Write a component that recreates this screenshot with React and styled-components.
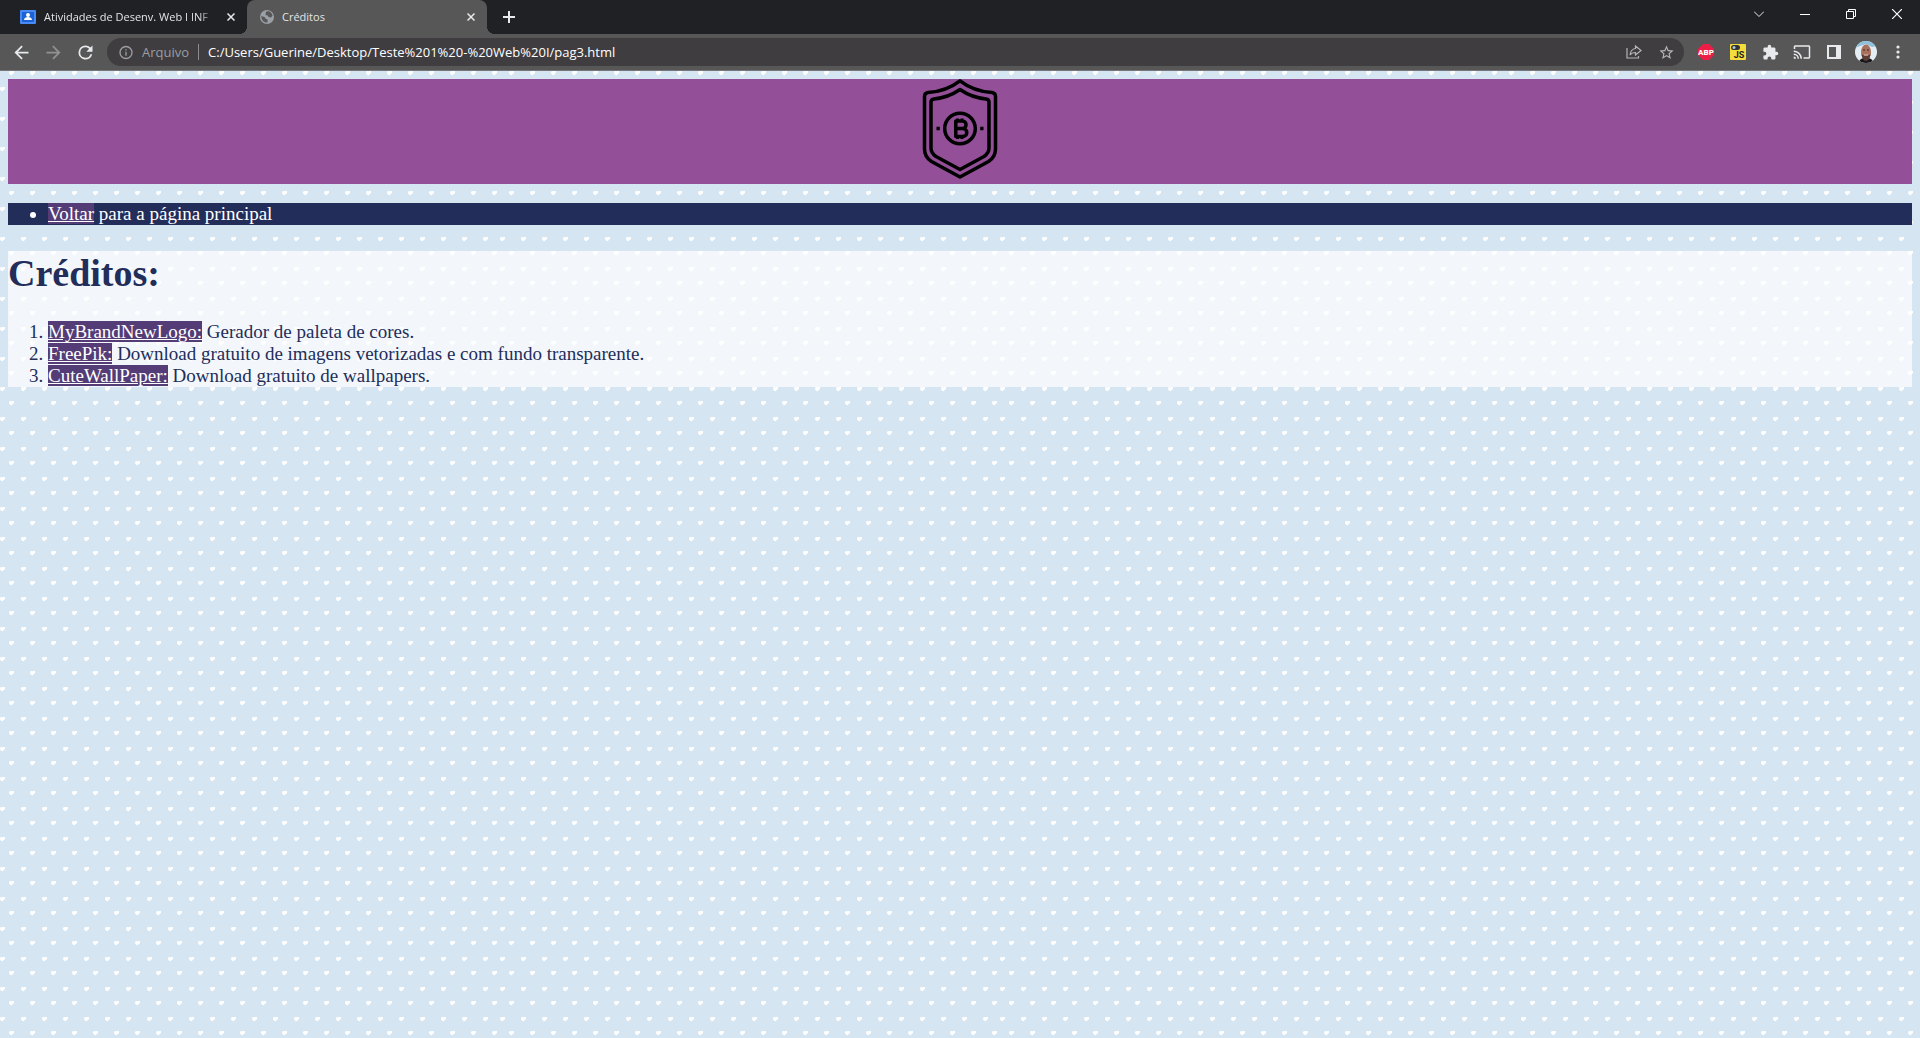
import React from "react";
import styled, { createGlobalStyle } from "styled-components";

const heartPath = "M0 1L1 0H2L2.500 .6L3 0H5V2L2.500 4.200H2L.3 3Z";
const hearts = Array.from({ length: 24 }, (_, i) =>
  `<use href="#h" x="${i * 21 + 9}" y="0"/>` + `<use href="#h" x="${i * 21}" y="16"/>`
).join("");
const wallpaper = `<svg xmlns="http://www.w3.org/2000/svg" width="500" height="30"><defs><path id="h" d="${heartPath}" fill="#fff"/></defs><rect width="500" height="30" fill="#d5e5f2"/>${hearts}</svg>`;
const wallpaperUrl = `url("data:image/svg+xml,${encodeURIComponent(wallpaper)}")`;

const GlobalStyle = createGlobalStyle`
  html, body { margin: 0; min-height: 100%; }
  body { font-family: "Liberation Serif", "Times New Roman", serif; }
  *, *::before, *::after { box-sizing: border-box; }
`;

const Window = styled.div`
  display: flex;
  flex-direction: column;
  min-height: 100vh;
`;

const TabStrip = styled.div`
  display: flex;
  height: 34px;
  background: #202124;
  color: #e3e4e6;
  font: 11px/16px "Open Sans", "Noto Sans", sans-serif;
`;

const Tab = styled.div`
  position: relative;
  display: flex;
  align-items: center;
  gap: 8px;
  width: ${(p) => (p.$active ? 240 : 247)}px;
  padding: 0 8px 0 ${(p) => (p.$active ? 13 : 20)}px;
  border-radius: 8px 8px 0 0;
  background: ${(p) => (p.$active ? "#575757" : "transparent")};

  &::before, &::after {
    content: ${(p) => (p.$active ? '""' : "none")};
    position: absolute;
    bottom: 0;
    width: 8px;
    height: 8px;
  }
  &::before { left: -8px; background: radial-gradient(circle at 0 0, transparent 8px, #575757 8px); }
  &::after { right: -8px; background: radial-gradient(circle at 100% 0, transparent 8px, #575757 8px); }
`;

const TabTitle = styled.span`
  flex: 1;
  min-width: 0;
  overflow: hidden;
  white-space: nowrap;
  mask-image: ${(p) => (p.$faded ? "linear-gradient(to left, transparent, #000 16px)" : "none")};
`;

const IconButton = styled.button`
  display: flex;
  align-items: center;
  justify-content: center;
  flex: none;
  width: ${(p) => p.$size || 32}px;
  height: ${(p) => p.$height || p.$size || 32}px;
  padding: 0;
  border: 0;
  background: transparent;
  color: ${(p) => p.$color || "#e8eaed"};
`;

const NewTab = styled(IconButton)`
  margin-left: 6px;
  align-self: center;
`;

const WindowControls = styled.div`
  display: flex;
  margin-left: auto;
`;

const Toolbar = styled.div`
  display: flex;
  align-items: center;
  height: 37px;
  padding: 0 6px 0 5px;
  background: #575757;
  border-bottom: 1px solid #77777a;
`;

const AddressBar = styled.div`
  display: flex;
  flex: 1;
  align-items: center;
  height: 28px;
  margin-left: 6px;
  padding: 0 2px 0 11px;
  border-radius: 14px;
  background: #3f3d40;
  font: 13px/20px "Open Sans", "Noto Sans", sans-serif;
`;

const Scheme = styled.label`
  margin-left: 8px;
  padding-right: 9px;
  color: #9b9ea3;
  border-right: 1px solid #8a8b8e;
  line-height: 16px;
`;

const Url = styled.input`
  flex: 1;
  min-width: 0;
  padding: 0 0 0 9px;
  border: 0;
  outline: 0;
  background: transparent;
  color: #fff;
  font: inherit;
`;

const Extensions = styled.div`
  display: flex;
  margin-left: 6px;
`;

const Page = styled.div`
  flex: 1;
  padding: 8px;
  background: #d5e5f2 ${wallpaperUrl};
  color: #222d5a;
  font-size: 19px;
  line-height: 22px;
`;

const Banner = styled.header`
  display: flex;
  justify-content: center;
  padding-bottom: 5px;
  background: #934f97;
`;

const Nav = styled.ul`
  margin: 19px 0 26px;
  padding-left: 40px;
  background: #222d5a;
  color: #fff;
`;

const Credits = styled.section`
  background: rgba(255, 255, 255, 0.7);
`;

const Title = styled.h1`
  margin: 0 0 26px;
  font-size: 38px;
  line-height: 44px;
`;

const List = styled.ol`
  margin: 0;
  padding-left: 40px;
`;

const Link = styled.a`
  background: #543c77;
  color: #fff;
`;

const Svg = ({ size = 16, children, ...rest }) => (
  <svg width={size} height={size} viewBox="0 0 24 24" fill="currentColor" aria-hidden="true" {...rest}>{children}</svg>
);
const CloseIcon = () => (
  <Svg size={8} viewBox="0 0 8 8" stroke="currentColor" strokeWidth="1.5"><path d="M.5.5l7 7M7.5.5l-7 7" /></Svg>
);
const ClassroomIcon = () => (
  <Svg viewBox="0 0 16 16">
    <rect y="1" width="16" height="14" rx="1" fill="#4a8af4" />
    <rect x="2" y="3" width="12" height="10" fill="#1b63d4" />
    <circle cx="8" cy="6" r="2" fill="#fff" />
    <path d="M4 11c0-2 2-3 4-3s4 1 4 3z" fill="#fff" />
  </Svg>
);
const GlobeIcon = () => (
  <Svg viewBox="0 0 14 14" size={14}>
    <circle cx="7" cy="7" r="7" fill="#9aa0a6" />
    <path d="M1.300 6L4.500 7l1.500 2 1.500.5v3C4 12.800 1.400 10.500 1.300 6zM6 1.500l3-.2c1.500.6 3 2 3.500 4.500L11 7.500 8.500 7l-.8-1.500L5.500 5z" fill="#575757" />
  </Svg>
);
const BackIcon = () => <Svg size={21}><path d="M20 11H7.830l5.590-5.590L12 4l-8 8 8 8 1.410-1.410L7.830 13H20v-2z" /></Svg>;
const ForwardIcon = () => <Svg size={21}><path d="M12 4l-1.410 1.410L16.170 11H4v2h12.170l-5.580 5.590L12 20l8-8z" /></Svg>;
const ReloadIcon = () => <Svg size={21}><path d="M17.650 6.350A7.960 7.960 0 0 0 12 4a8 8 0 1 0 7.730 10h-2.080A6 6 0 1 1 12 6c1.660 0 3.140.69 4.220 1.780L13 11h7V4z" /></Svg>;
const InfoIcon = () => <Svg size={17}><path d="M11 7h2v2h-2zm0 4h2v6h-2zm1-9a10 10 0 1 0 0 20 10 10 0 0 0 0-20zm0 18a8 8 0 1 1 0-16 8 8 0 0 1 0 16z" /></Svg>;
const ShareIcon = () => (
  <Svg viewBox="0 0 16 16" fill="none" stroke="currentColor" strokeWidth="1.2">
    <path d="M1 4v10h11.500V12M9.500 2l5.500 4.500-5.500 4.500V8.500C7 8.500 5 9.500 4 11c.4-3.500 2-6 5.500-6.500z" />
  </Svg>
);
const StarIcon = () => <Svg size={17}><path d="M22 9.240l-7.190-.62L12 2 9.190 8.630 2 9.240l5.460 4.730L5.820 21 12 17.270 18.180 21l-1.630-7.030L22 9.240zM12 15.400l-3.760 2.270 1-4.280-3.320-2.880 4.380-.38L12 6.100l1.710 4.040 4.380.38-3.320 2.880 1 4.280L12 15.400z" /></Svg>;
const AbpIcon = () => (
  <Svg viewBox="0 0 16 16">
    <path d="M5 0h6l5 5v6l-5 5H5l-5-5V5z" fill="#ed1e45" />
    <text x="8" y="11" textAnchor="middle" fontFamily="Roboto, sans-serif" fontWeight="900" fontSize="8" fill="#fff">ABP</text>
  </Svg>
);
const JsIcon = () => (
  <Svg viewBox="0 0 16 16">
    <rect width="16" height="16" rx="1" fill="#f5de3c" />
    <rect x="1" y="1" width="9" height="5" rx="2.500" fill="#333" />
    <circle cx="4" cy="3.500" r="1.500" fill="#aaccd8" />
    <text x="9" y="14" textAnchor="middle" fontFamily="Roboto, sans-serif" fontWeight="700" fontSize="9" fill="#222">JS</text>
  </Svg>
);
const PuzzleIcon = () => <Svg size={17}><path d="M20.500 11H19V7c0-1.100-.9-2-2-2h-4V3.500a2.500 2.500 0 0 0-5 0V5H4c-1.100 0-2 .9-2 2v3.800h1.500a2.700 2.700 0 0 1 0 5.400H2V20c0 1.100.9 2 2 2h3.800v-1.500a2.700 2.700 0 0 1 5.400 0V22H17c1.100 0 2-.9 2-2v-4h1.500a2.500 2.500 0 0 0 0-5z" /></Svg>;
const CastIcon = () => <Svg size={18}><path d="M21 3H3c-1.100 0-2 .9-2 2v3h2V5h18v14h-7v2h7c1.100 0 2-.9 2-2V5c0-1.100-.9-2-2-2zM1 18v3h3a3 3 0 0 0-3-3zm0-4v2a5 5 0 0 1 5 5h2a7 7 0 0 0-7-7zm0-4v2a9 9 0 0 1 9 9h2c0-6.080-4.930-11-11-11z" /></Svg>;
const PanelIcon = () => <Svg size={14} viewBox="0 0 14 14"><path fillRule="evenodd" d="M0 0h14v14H0zM2 2v10h7V2z" /></Svg>;
const Avatar = () => (
  <Svg size={22} viewBox="0 0 22 22">
    <defs><clipPath id="face"><circle cx="11" cy="11" r="11" /></clipPath></defs>
    <g clipPath="url(#face)">
      <rect width="22" height="22" fill="#e4edf3" />
      <path d="M0 0h22v5l-5 1-6-3-6 2-5 2z" fill="#8fc0dc" />
      <path d="M4 22c0-4 3-5 7-5s7 1 7 5z" fill="#17171c" />
      <ellipse cx="11" cy="11" rx="5" ry="7.500" fill="#a8705d" />
      <path d="M6.500 13c2 2 7 2 9 0-.5 4-2 7-4.500 7s-4-3-4.500-7z" fill="#5c3b35" />
      <path d="M8 9h2M12 9h2" stroke="#3c2724" />
      <path d="M9 14h4" stroke="#e5c5bb" />
    </g>
  </Svg>
);
const MenuIcon = () => <Svg size={14} viewBox="0 0 14 14"><circle cx="7" cy="2" r="1.600" /><circle cx="7" cy="7" r="1.600" /><circle cx="7" cy="12" r="1.600" /></Svg>;

const ShieldLogo = () => (
  <svg width="100" height="100" viewBox="0 0 100 100" fill="none" stroke="#000" strokeWidth="3.500" strokeLinejoin="round" role="img" aria-label="Logo">
    <path d="M50 1.800C42 8 32 12.500 18 13.500q-3.500.5-3.500 4V70q0 8 7 12.500L50 98 78.500 82.500q7-4.500 7-12.500V17.500q0-3.500-3.500-4C68 12.500 58 8 50 1.800z" />
    <path d="M50 10.500C42 16 34 19 24 20q-3 .5-3 3v46q0 5 5 8.500L50 90.500 74 77.500q5-3.500 5-8.500V23q0-2.500-3-3C66 19 58 16 50 10.500z" />
    <circle cx="50" cy="49.500" r="15.300" />
    <path d="M45.800 42h6.500a3.500 3.500 0 0 1 0 7.500H45.800zM45.800 49.500h7a4 4 0 0 1 0 8h-7z" />
    <path d="M47.500 39.500V42M52 39.500V42M47.500 57V60M52 57V60" strokeWidth="3" />
    <path d="M26.500 49.500h3.300M70.200 49.500h3.300" />
  </svg>
);

const credits = [
  ["MyBrandNewLogo:", "Gerador de paleta de cores."],
  ["FreePik:", "Download gratuito de imagens vetorizadas e com fundo transparente."],
  ["CuteWallPaper:", "Download gratuito de wallpapers."],
];

export default function App() {
  return (
    <>
      <GlobalStyle />
      <Window>
        <TabStrip>
          <Tab>
            <ClassroomIcon />
            <TabTitle $faded>Atividades de Desenv. Web I INF</TabTitle>
            <IconButton $size={16} aria-label="Fechar guia"><CloseIcon /></IconButton>
          </Tab>
          <Tab $active>
            <GlobeIcon />
            <TabTitle>Créditos</TabTitle>
            <IconButton $size={16} aria-label="Fechar guia"><CloseIcon /></IconButton>
          </Tab>
          <NewTab aria-label="Nova guia">
            <Svg size={12} viewBox="0 0 12 12"><path d="M5 0h2v5h5v2H7v5H5V7H0V5h5z" /></Svg>
          </NewTab>
          <WindowControls>
            <IconButton $size={46} $height={28} aria-label="Pesquisar guias"><Svg size={10} viewBox="0 0 10 10" fill="none" stroke="currentColor"><path d="M0 2.500l5 5 5-5" /></Svg></IconButton>
            <IconButton $size={46} $height={28} $color="#fff" aria-label="Minimizar"><Svg size={10} viewBox="0 0 10 10"><path d="M0 5h10v1H0z" /></Svg></IconButton>
            <IconButton $size={46} $height={28} $color="#fff" aria-label="Restaurar"><Svg size={10} viewBox="0 0 10 10" fill="none" stroke="currentColor"><path d="M.5 2.500h7v7h-7zM2.500 2.500v-2h7v7h-2" /></Svg></IconButton>
            <IconButton $size={46} $height={28} $color="#fff" aria-label="Fechar"><Svg size={10} viewBox="0 0 10 10" stroke="currentColor" strokeWidth="1.200"><path d="M0 0l10 10M10 0L0 10" /></Svg></IconButton>
          </WindowControls>
        </TabStrip>
        <Toolbar>
          <IconButton aria-label="Voltar"><BackIcon /></IconButton>
          <IconButton $color="#929294" aria-label="Avançar"><ForwardIcon /></IconButton>
          <IconButton aria-label="Recarregar"><ReloadIcon /></IconButton>
          <AddressBar>
            <IconButton $size={16} $color="#9b9ea3" aria-label="Informações do site"><InfoIcon /></IconButton>
            <Scheme htmlFor="url">Arquivo</Scheme>
            <Url id="url" type="text" spellCheck={false} defaultValue="C:/Users/Guerine/Desktop/Teste%201%20-%20Web%20I/pag3.html" />
            <IconButton $color="#b4b5b8" aria-label="Compartilhar"><ShareIcon /></IconButton>
            <IconButton $color="#b4b5b8" aria-label="Favoritar"><StarIcon /></IconButton>
          </AddressBar>
          <Extensions>
            <IconButton aria-label="Adblock Plus"><AbpIcon /></IconButton>
            <IconButton aria-label="JavaScript"><JsIcon /></IconButton>
            <IconButton aria-label="Extensões"><PuzzleIcon /></IconButton>
            <IconButton aria-label="Transmitir"><CastIcon /></IconButton>
            <IconButton aria-label="Painel lateral"><PanelIcon /></IconButton>
            <IconButton aria-label="Perfil"><Avatar /></IconButton>
            <IconButton aria-label="Menu"><MenuIcon /></IconButton>
          </Extensions>
        </Toolbar>
        <Page>
          <Banner><ShieldLogo /></Banner>
          <Nav>
            <li><Link href="#principal">Voltar</Link> para a página principal</li>
          </Nav>
          <Credits>
            <Title>Créditos:</Title>
            <List>
              {credits.map(([name, text]) => (
                <li key={name}><Link href="#creditos">{name}</Link> {text}</li>
              ))}
            </List>
          </Credits>
        </Page>
      </Window>
    </>
  );
}
